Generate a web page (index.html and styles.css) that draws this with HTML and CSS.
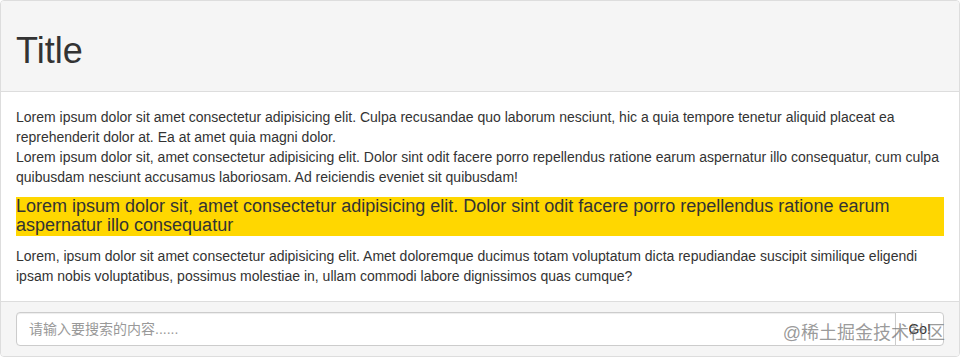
FILE: index.html
```html
<!DOCTYPE html>
<html>
<head>
  <meta charset="utf-8">
  <title>Panel</title>
  <link rel="stylesheet" href="styles.css">
</head>
<body>
  <div class="panel">
    <div class="panel-heading">
      <h1>Title</h1>
    </div>

    <div class="panel-body">
      <p>
        Lorem ipsum dolor sit amet consectetur adipisicing elit. Culpa recusandae quo laborum nesciunt, hic a quia tempore tenetur aliquid placeat ea reprehenderit dolor at. Ea at amet quia magni dolor.<br>
        Lorem ipsum dolor sit, amet consectetur adipisicing elit. Dolor sint odit facere porro repellendus ratione earum aspernatur illo consequatur, cum culpa quibusdam nesciunt accusamus laboriosam. Ad reiciendis eveniet sit quibusdam!
      </p>
      <h4 class="highlight">Lorem ipsum dolor sit, amet consectetur adipisicing elit. Dolor sint odit facere porro repellendus ratione earum aspernatur illo consequatur</h4>
      <p>
        Lorem, ipsum dolor sit amet consectetur adipisicing elit. Amet doloremque ducimus totam voluptatum dicta repudiandae suscipit similique eligendi ipsam nobis voluptatibus, possimus molestiae in, ullam commodi labore dignissimos quas cumque?
      </p>
    </div>

    <div class="panel-footer">
      <div class="input-group">
        <input type="text" class="form-control" placeholder="请输入要搜索的内容......">
        <button class="btn btn-default">Go!</button>
      </div>
    </div>

    <div class="watermark">@稀土掘金技术社区</div>
  </div>
</body>
</html>
```

FILE: styles.css
```css
body {
  font-family: "Liberation Sans", Arial, "Noto Sans CJK SC", sans-serif;
  font-size: 14px;
  line-height: 20px;
  color: #333;
  margin: 0;
  background: #fff;
}

.panel {
  position: relative;
  border: 1px solid #ddd;
  border-radius: 4px;
  background: #fff;
}

.panel-heading {
  padding: 10px 15px;
  background: #f5f5f5;
  border-bottom: 1px solid #ddd;
  border-radius: 3px 3px 0 0;
}

.panel-heading h1 {
  margin: 20px 0 10px 0;
  font-size: 36px;
  font-weight: 500;
  line-height: 1.1;
}

.panel-body {
  padding: 15px;
}

.panel-body p {
  margin: 0 0 10px 0;
}

.panel-body p:last-child {
  margin-bottom: 0;
}

.highlight {
  margin: 10px 0;
  font-size: 18px;
  font-weight: 500;
  line-height: 1.1;
  background: #ffd700;
}

.panel-footer {
  padding: 10px 15px;
  background: #f5f5f5;
  border-top: 1px solid #ddd;
  border-radius: 0 0 3px 3px;
}

.input-group {
  display: flex;
}

.form-control {
  flex: 1;
  height: 34px;
  padding: 6px 12px;
  border: 1px solid #ccc;
  border-radius: 4px 0 0 4px;
  font-family: inherit;
  font-size: 14px;
  color: #555;
  box-sizing: border-box;
  box-shadow: inset 0 1px 1px rgba(0, 0, 0, 0.075);
}

.form-control::placeholder {
  color: #999;
}

.btn {
  height: 34px;
  padding: 6px 12px;
  margin-left: -1px;
  font-family: inherit;
  font-size: 14px;
  line-height: 20px;
  cursor: pointer;
}

.btn-default {
  background: #fff;
  color: #333;
  border: 1px solid #ccc;
  border-radius: 0 4px 4px 0;
}

.watermark {
  position: absolute;
  right: 14px;
  bottom: 11px;
  font-size: 18px;
  line-height: 24px;
  color: rgba(110, 110, 110, 0.7);
  pointer-events: none;
}
```
